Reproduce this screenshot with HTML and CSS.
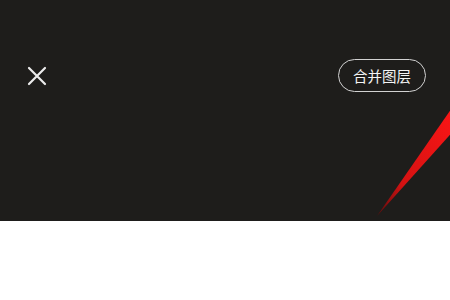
FILE: index.html
```html
<!DOCTYPE html>
<html lang="zh-CN">
<head>
    <meta charset="UTF-8">
    <meta name="viewport" content="width=device-width, initial-scale=1.0">
    <title>合并图层</title>
    <link rel="stylesheet" href="styles.css">
</head>
<body>
    <div class="stage">
        <div class="toolbar">
            <button class="close-btn" aria-label="关闭">
                <svg width="20" height="20" viewBox="0 0 20 20">
                    <path d="M2 2 L18 18 M18 2 L2 18" stroke="#ececec" stroke-width="2.2" stroke-linecap="round"/>
                </svg>
            </button>
            <button class="merge-btn">合并图层</button>
        </div>
        <!-- red brush stroke on the canvas -->
        <svg class="stroke" width="80" height="130" viewBox="0 0 80 130">
            <defs>
                <linearGradient id="brush" x1="0" y1="1" x2="1" y2="0">
                    <stop offset="0" stop-color="#5a0c0c"/>
                    <stop offset="0.3" stop-color="#d41212"/>
                    <stop offset="1" stop-color="#ff1616"/>
                </linearGradient>
            </defs>
            <polygon points="1,125 80,11 80,37" fill="url(#brush)"/>
        </svg>
    </div>
</body>
</html>
```

FILE: styles.css
```css
body {
    margin: 0;
    padding: 0;
    background-color: #ffffff;
    font-family: "Noto Sans CJK SC", "Noto Sans", sans-serif;
}
.stage {
    position: relative;
    height: 221px;
    background-color: #1e1d1b;
    overflow: hidden;
}
.toolbar {
    display: flex;
    align-items: center;
    justify-content: space-between;
    padding: 59px 24px 0 27px;
}
.close-btn {
    background: none;
    border: none;
    padding: 0;
    width: 20px;
    height: 20px;
    cursor: pointer;
}
.close-btn svg {
    display: block;
}
.merge-btn {
    height: 33px;
    width: 88px;
    padding: 0;
    background: transparent;
    color: #f4f4f4;
    border: 1.5px solid #d2d2d2;
    border-radius: 17px;
    font-family: inherit;
    font-size: 14.5px;
    cursor: pointer;
}
.stroke {
    position: absolute;
    left: 376px;
    top: 91px;
}
```
